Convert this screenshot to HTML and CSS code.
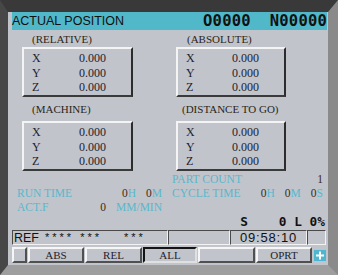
FILE: index.html
```html
<!DOCTYPE html>
<html lang="en">

<head>
    <meta charset="UTF-8">
    <title>Actual Position</title>
    <link rel="stylesheet" href="styles.css">
</head>

<body>
    <div id="frame">
        <div id="panel">
            <div class="title">
                <span>ACTUAL POSITION</span>
                <span class="prog">O0000  N00000</span>
            </div>

            <div id="axes">
                <div class="group">
                    <div class="label label-rel">(RELATIVE)</div>
                    <div class="box">
                        <div class="row"><span>X</span><span>0.000</span></div>
                        <div class="row"><span>Y</span><span>0.000</span></div>
                        <div class="row"><span>Z</span><span>0.000</span></div>
                    </div>
                </div>
                <div class="group">
                    <div class="label label-abs">(ABSOLUTE)</div>
                    <div class="box">
                        <div class="row"><span>X</span><span>0.000</span></div>
                        <div class="row"><span>Y</span><span>0.000</span></div>
                        <div class="row"><span>Z</span><span>0.000</span></div>
                    </div>
                </div>
                <div class="group low">
                    <div class="label label-rel">(MACHINE)</div>
                    <div class="box">
                        <div class="row"><span>X</span><span>0.000</span></div>
                        <div class="row"><span>Y</span><span>0.000</span></div>
                        <div class="row"><span>Z</span><span>0.000</span></div>
                    </div>
                </div>
                <div class="group low">
                    <div class="label label-dist">(DISTANCE TO GO)</div>
                    <div class="box">
                        <div class="row"><span>X</span><span>0.000</span></div>
                        <div class="row"><span>Y</span><span>0.000</span></div>
                        <div class="row"><span>Z</span><span>0.000</span></div>
                    </div>
                </div>
            </div>

            <div id="info">
                <div class="line"></div>
                <div class="line"><span>PART COUNT</span><span class="num">1</span></div>

                <div class="line"><span>RUN TIME</span>
                    <span><span class="num">0</span>H<span class="num sp">0</span>M</span>
                </div>
                <div class="line"><span>CYCLE TIME</span>
                    <span><span class="num">0</span>H<span class="num sp">0</span>M<span class="num sp">0</span>S</span>
                </div>

                <div class="line"><span>ACT.F</span>
                    <span><span class="num">0</span><span class="sp">MM/MIN</span></span>
                </div>
                <div class="line"></div>

                <div class="line"></div>
                <div class="line spindle">S    0 L 0%</div>
            </div>

            <div id="status">
                <div class="seg seg-ref">REF<span class="stars">****</span><span class="stars">***</span><span class="stars wide">***</span></div>
                <div class="seg seg-blank"></div>
                <div class="seg seg-time">09:58:10</div>
                <div class="seg seg-end"></div>
            </div>

            <div id="softkeys">
                <div class="key key-small"></div>
                <div class="key key-abs">ABS</div>
                <div class="key key-rel">REL</div>
                <div class="key key-all pressed">ALL</div>
                <div class="key key-blank"></div>
                <div class="key key-oprt">OPRT</div>
                <div class="more">
                    <svg width="12" height="11" viewBox="0 0 12 11">
                        <rect width="12" height="11" fill="#4fb6d0" />
                        <rect x="5" y="1.5" width="2" height="8" fill="#ffffff" />
                        <rect x="2" y="4.5" width="8" height="2" fill="#ffffff" />
                    </svg>
                </div>
            </div>
        </div>
    </div>
</body>

</html>
```

FILE: styles.css
```css
* {
    margin: 0;
    padding: 0;
    box-sizing: border-box;
}

body {
    background-color: #3a3a3a;
    font-family: "Liberation Serif", serif;
    width: 338px;
    height: 275px;
    overflow: hidden;
}

#frame {
    width: 338px;
    height: 275px;
    border-top: 12px solid #393939;
    border-left: 8px solid #474747;
    border-right: 10px solid #8a8a8a;
    border-bottom: 10px solid #9e9e9e;
}

#panel {
    width: 320px;
    height: 253px;
    background-color: #c1c4cb;
    padding: 0 1px 0 4px;
    display: flex;
    flex-direction: column;
}

.title {
    height: 18px;
    background-color: #50b8c9;
    display: flex;
    justify-content: space-between;
    align-items: center;
    font-family: "Liberation Sans", sans-serif;
    font-size: 12.5px;
    color: #101010;
}

.prog {
    font-family: "DejaVu Sans Mono", monospace;
    font-weight: bold;
    font-size: 15.5px;
    white-space: pre;
    letter-spacing: 0.2px;
    color: #111;
}

#axes {
    display: grid;
    grid-template-columns: 111px 110px;
    column-gap: 43px;
    margin-left: 10px;
}

.label {
    height: 17px;
    padding-top: 2px;
    line-height: 15px;
    font-size: 11px;
    color: #2c2418;
}

.low .label {
    height: 24px;
    padding-top: 5px;
}

.label-rel {
    padding-left: 10px;
}

.label-abs {
    padding-left: 11px;
}

.label-dist {
    padding-left: 6px;
}

.box {
    height: 50px;
    border: 2px solid;
    border-color: #f4f4f4 #2c2c2c #3a3a3a #f4f4f4;
    padding: 2px 25px 0 8px;
    font-size: 12px;
    color: #1e1e30;
}

.row {
    height: 14.5px;
    line-height: 14.5px;
    display: flex;
    justify-content: space-between;
}

#info {
    margin: 1px 0 0 5px;
    display: grid;
    grid-template-columns: 145px 151px;
    column-gap: 10px;
    grid-auto-rows: 14px;
    font-size: 11.5px;
    color: #58b8cc;
}

.line {
    display: flex;
    justify-content: space-between;
    align-items: center;
    white-space: pre;
}

.num {
    color: #3a2a14;
}

.sp {
    margin-left: 10px;
}

.spindle {
    justify-content: flex-end;
    margin-right: -2px;
    font-family: "DejaVu Sans Mono", monospace;
    font-weight: bold;
    font-size: 12.8px;
    color: #111;
}

#status {
    margin-top: 2px;
    height: 15px;
    display: flex;
}

.seg {
    height: 15px;
    border: 1px solid;
    border-color: #4a4a4a #f2f2f2 #f2f2f2 #4a4a4a;
    font-family: "Liberation Sans", sans-serif;
    line-height: 13px;
    color: #111;
}

.seg-ref {
    width: 156px;
    font-size: 12.5px;
    padding-left: 1px;
    white-space: pre;
}

.stars {
    font-size: 11px;
    letter-spacing: 3px;
    margin-left: 6px;
    vertical-align: 1px;
}

.stars.wide {
    margin-left: 22px;
}

.seg-blank {
    width: 62px;
}

.seg-time {
    width: 77px;
    font-size: 13px;
    letter-spacing: 0.8px;
    text-align: center;
}

.seg-end {
    width: 19px;
}

#softkeys {
    margin-top: 2px;
    height: 16px;
    display: flex;
    gap: 1px;
}

.key {
    height: 16px;
    border: 2px solid;
    border-color: #f6f6f6 #505050 #505050 #f6f6f6;
    font-size: 11px;
    line-height: 12px;
    text-align: center;
    color: #1e1e30;
}

.key.pressed {
    border-color: #141414 #e0e0e0 #e0e0e0 #141414;
}

.key-small {
    width: 15px;
}

.key-abs {
    width: 56px;
}

.key-rel {
    width: 57px;
}

.key-all {
    width: 54px;
}

.key-blank {
    width: 57px;
}

.key-oprt {
    width: 56px;
}

.more {
    width: 13px;
    display: flex;
    align-items: center;
    justify-content: center;
}
```
